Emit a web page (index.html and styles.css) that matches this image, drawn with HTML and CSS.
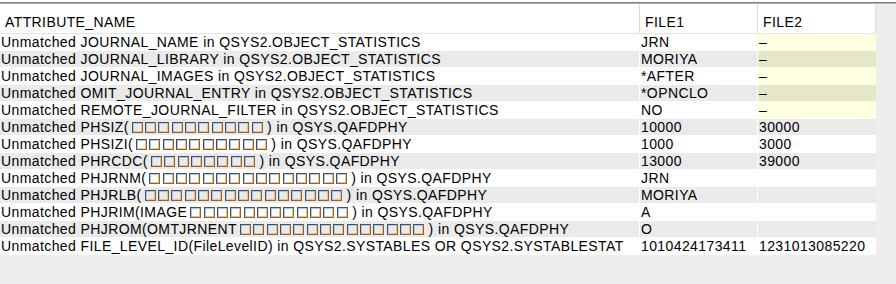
FILE: index.html
```html
<!DOCTYPE html>
<html>
<head>
<meta charset="utf-8">
<link rel="stylesheet" href="styles.css">
</head>
<body>
<div class="topgap"></div>
<div class="rule"></div>
<div class="main">
  <div class="table">
    <div class="head">
      <div class="hcell">ATTRIBUTE_NAME</div>
      <div class="hcell">FILE1</div>
      <div class="hcell">FILE2</div>
    </div>
    <div class="body">
      <div class="row"><div class="c">Unmatched JOURNAL_NAME in QSYS2.OBJECT_STATISTICS</div><div class="c">JRN</div><div class="c hl">–</div></div>
      <div class="row alt"><div class="c">Unmatched JOURNAL_LIBRARY in QSYS2.OBJECT_STATISTICS</div><div class="c">MORIYA</div><div class="c hl">–</div></div>
      <div class="row"><div class="c">Unmatched JOURNAL_IMAGES in QSYS2.OBJECT_STATISTICS</div><div class="c">*AFTER</div><div class="c hl">–</div></div>
      <div class="row alt"><div class="c">Unmatched OMIT_JOURNAL_ENTRY in QSYS2.OBJECT_STATISTICS</div><div class="c">*OPNCLO</div><div class="c hl">–</div></div>
      <div class="row"><div class="c">Unmatched REMOTE_JOURNAL_FILTER in QSYS2.OBJECT_STATISTICS</div><div class="c">NO</div><div class="c hl">–</div></div>
      <div class="row alt"><div class="c">Unmatched PHSIZ(<span class="tofus"><i></i><i></i><i></i><i></i><i></i><i></i><i></i><i></i><i></i><i></i></span>) in QSYS.QAFDPHY</div><div class="c">10000</div><div class="c">30000</div></div>
      <div class="row"><div class="c">Unmatched PHSIZI(<span class="tofus"><i></i><i></i><i></i><i></i><i></i><i></i><i></i><i></i><i></i><i></i></span>) in QSYS.QAFDPHY</div><div class="c">1000</div><div class="c">3000</div></div>
      <div class="row alt"><div class="c">Unmatched PHRCDC(<span class="tofus"><i></i><i></i><i></i><i></i><i></i><i></i><i></i><i></i></span>) in QSYS.QAFDPHY</div><div class="c">13000</div><div class="c">39000</div></div>
      <div class="row"><div class="c">Unmatched PHJRNM(<span class="tofus"><i></i><i></i><i></i><i></i><i></i><i></i><i></i><i></i><i></i><i></i><i></i><i></i><i></i><i></i><i></i></span>) in QSYS.QAFDPHY</div><div class="c">JRN</div><div class="c"></div></div>
      <div class="row alt"><div class="c">Unmatched PHJRLB(<span class="tofus"><i></i><i></i><i></i><i></i><i></i><i></i><i></i><i></i><i></i><i></i><i></i><i></i><i></i><i></i><i></i></span>) in QSYS.QAFDPHY</div><div class="c">MORIYA</div><div class="c"></div></div>
      <div class="row"><div class="c">Unmatched PHJRIM(IMAGE<span class="tofus"><i></i><i></i><i></i><i></i><i></i><i></i><i></i><i></i><i></i><i></i><i></i><i></i></span>) in QSYS.QAFDPHY</div><div class="c">A</div><div class="c"></div></div>
      <div class="row alt"><div class="c">Unmatched PHJROM(OMTJRNENT<span class="tofus"><i></i><i></i><i></i><i></i><i></i><i></i><i></i><i></i><i></i><i></i><i></i><i></i><i></i><i></i></span>) in QSYS.QAFDPHY</div><div class="c">O</div><div class="c"></div></div>
      <div class="row"><div class="c">Unmatched FILE_LEVEL_ID(FileLevelID) in QSYS2.SYSTABLES OR QSYS2.SYSTABLESTAT</div><div class="c">1010424173411</div><div class="c">1231013085220</div></div>
    </div>
  </div>
</div>
</body>
</html>
```
FILE: styles.css
```css
html, body {
  margin: 0;
  padding: 0;
}
body {
  width: 896px;
  height: 284px;
  background: #eeeeee;
  font-family: "Liberation Sans", Arial, sans-serif;
  font-size: 14px;
  letter-spacing: 0.4px;
  color: #000;
  overflow: hidden;
}
.topgap {
  height: 2px;
  background: #ffffff;
}
.rule {
  height: 0;
  border-top: 1px solid #7d7d7d;
  border-bottom: 1px solid #b2b2b2;
}
.main {
  display: flex;
}
.table {
  width: 876px;
  display: flex;
  flex-direction: column;
}
.head {
  display: grid;
  grid-template-columns: 640px 118px 118px;
  background: #ffffff;
  border-bottom: 1px solid #e3e3e3;
}
.hcell {
  height: 29px;
  box-sizing: border-box;
  padding: 10px 0 0 5px;
  line-height: 16px;
  border-right: 1px solid #dcdcdc;
  white-space: nowrap;
}
.body {
  display: grid;
  grid-template-columns: 639px 117px 118px;
  grid-auto-rows: 16px;
  gap: 1px;
  padding-bottom: 1px;
  background: #ffffff;
}
.row {
  display: contents;
}
.c {
  line-height: 16px;
  padding-left: 1px;
  white-space: nowrap;
  overflow: hidden;
  background: #ffffff;
}
.row.alt .c {
  background: #eaeaea;
}
.c.hl {
  background: #ffffe1;
}
.row.alt .c.hl {
  background: #e6e6c8;
}
.tofus {
  letter-spacing: 0;
  padding: 0 2px 0 3px;
}
.tofus i {
  display: inline-block;
  width: 11px;
  height: 11px;
  box-sizing: border-box;
  margin: 0 2.33px 0 0;
  vertical-align: -1px;
  border: 1px solid;
  border-color: #4a4d60 #94642c #94642c #4a4d60;
  box-shadow: inset 1px 1px 0 #a9c8ea, inset -1px -1px 0 #e7c08a;
}
```
